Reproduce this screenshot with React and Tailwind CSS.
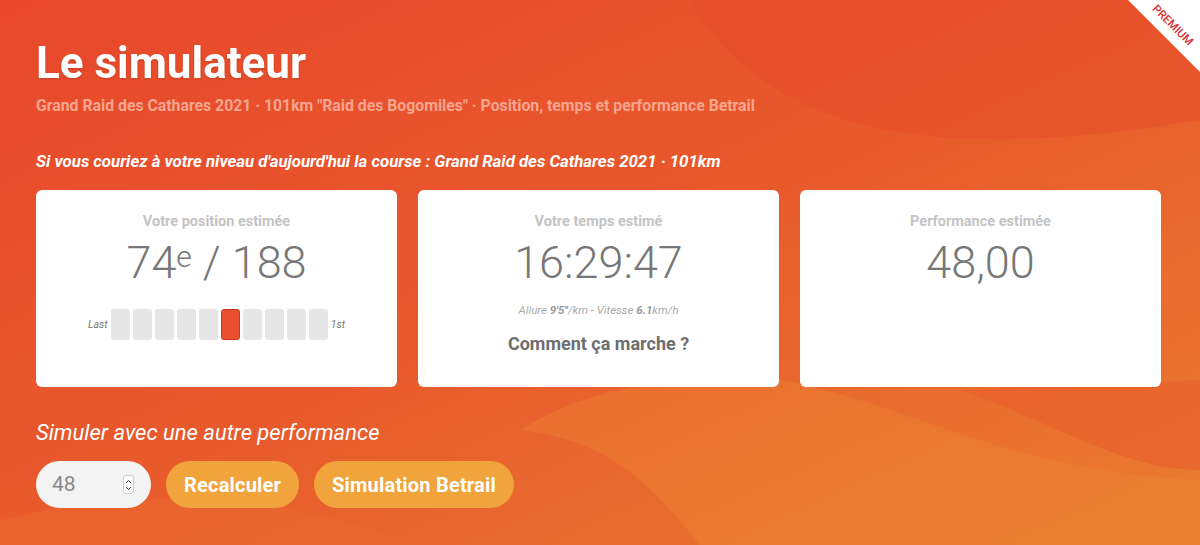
import React from "react";

function Card({ title, children }) {
  return (
    <div className="bg-white rounded-md h-[197px] flex flex-col items-center pt-[23px]">
      <div className="text-[14.5px] font-bold text-[#c4c4c4] leading-[18px]">{title}</div>
      {children}
    </div>
  );
}

function Bars() {
  const bars = [0, 1, 2, 3, 4, 5, 6, 7, 8, 9];
  return (
    <div className="flex items-center mt-[18px]">
      <span className="text-[10.5px] italic text-[#777] mr-[3px]">Last</span>
      <div className="flex gap-[3px]">
        {bars.map((i) => (
          <div
            key={i}
            className={
              i === 5
                ? "w-[19px] h-[31px] rounded-[3px] bg-[#e8502e] border border-[#c9391d]"
                : "w-[19px] h-[31px] rounded-[3px] bg-[#e6e6e6]"
            }
          />
        ))}
      </div>
      <span className="text-[10.5px] italic text-[#777] ml-[3px]">1st</span>
    </div>
  );
}

export default function App() {
  return (
    <div
      className="relative w-[1200px] h-[545px] overflow-hidden bg-gradient-to-br from-[#e8472b] via-[#e85a2c] to-[#ea7d31]"
      style={{ fontFamily: "Roboto, 'Liberation Sans', sans-serif" }}
    >
      <svg className="absolute inset-0" width="1200" height="545" viewBox="0 0 1200 545">
        <path d="M690 0 C760 120 900 170 1200 120 L1200 0 Z" fill="#e64a2b" opacity="0.45" />
        <path d="M780 380 C900 400 1000 470 1200 480 L1200 545 L700 545 C640 470 600 440 520 430 C600 380 700 375 780 380 Z" fill="#ec8634" opacity="0.4" />
        <path d="M0 520 C150 480 300 500 420 545 L0 545 Z" fill="#ea6a30" opacity="0.5" />
        <path d="M960 390 C1050 420 1120 470 1200 470 L1200 380 Z" fill="#e85d2c" opacity="0.6" />
      </svg>

      <div className="absolute top-0 right-0 w-[72px] h-[72px] bg-white [clip-path:polygon(0_0,100%_0,100%_100%)]">
        <div className="absolute top-[19px] left-[18px] w-[54px] text-center rotate-45 text-[11.5px] font-medium text-[#d8322a] leading-[12px]">
          PREMIUM
        </div>
      </div>

      <div className="relative pl-[36px] pr-[39px] pt-[37px]">
        <h1 className="text-[44px] font-bold text-white leading-[52px] drop-shadow-[0_1px_1px_rgba(0,0,0,0.15)]">
          Le simulateur
        </h1>
        <div className="mt-[8px] text-[15.8px] font-bold text-[#f6a58e] leading-[18px]">
          Grand Raid des Cathares 2021 · 101km "Raid des Bogomiles" · Position, temps et performance Betrail
        </div>
        <div className="mt-[37px] text-[16.8px] font-bold italic text-white leading-[18px]">
          Si vous couriez à votre niveau d'aujourd'hui la course : Grand Raid des Cathares 2021 · 101km
        </div>

        <div className="grid grid-cols-3 gap-[21px] mt-[20px]">
          <Card title="Votre position estimée">
            <div className="text-[45px] font-light text-[#777] leading-[56px] mt-[4px]">
              74<span className="text-[30px] align-top relative top-[-6px]">e</span> / 188
            </div>
            <Bars />
          </Card>
          <Card title="Votre temps estimé">
            <div className="text-[45px] font-light text-[#777] leading-[56px] mt-[4px]">16:29:47</div>
            <div className="mt-[12px] text-[11.5px] italic text-[#aaa] leading-[14px]">
              Allure <b className="text-[#999]">9'5"</b>/km - Vitesse <b className="text-[#999]">6.1</b>km/h
            </div>
            <div className="mt-[16px] text-[18px] font-bold text-[#6e6e6e] leading-[22px]">Comment ça marche ?</div>
          </Card>
          <Card title="Performance estimée">
            <div className="text-[45px] font-light text-[#777] leading-[56px] mt-[4px]">48,00</div>
          </Card>
        </div>

        <div className="mt-[33px] text-[22px] italic text-white leading-[26px]">
          Simuler avec une autre performance
        </div>
        <div className="flex gap-[15px] mt-[15px]">
          <div className="w-[115px] h-[47px] rounded-full bg-[#f3f3f3] flex items-center pl-[16px] pr-[17px] justify-between">
            <span className="text-[21px] text-[#888]">48</span>
            <div className="w-[11px] h-[19px] rounded-[3px] bg-white border border-[#ccc] flex flex-col items-center justify-center">
              <svg width="7" height="14" viewBox="0 0 7 14">
                <path d="M1 5 L3.5 2.5 L6 5" stroke="#444" strokeWidth="1" fill="none" />
                <path d="M1 9 L3.5 11.5 L6 9" stroke="#444" strokeWidth="1" fill="none" />
              </svg>
            </div>
          </div>
          <button className="h-[47px] px-[18px] rounded-full bg-[#f0a43b] text-white text-[20px] font-bold tracking-[0.2px]">
            Recalculer
          </button>
          <button className="h-[47px] px-[18px] rounded-full bg-[#f0a43b] text-white text-[20px] font-bold tracking-[0.2px]">
            Simulation Betrail
          </button>
        </div>
      </div>
    </div>
  );
}
